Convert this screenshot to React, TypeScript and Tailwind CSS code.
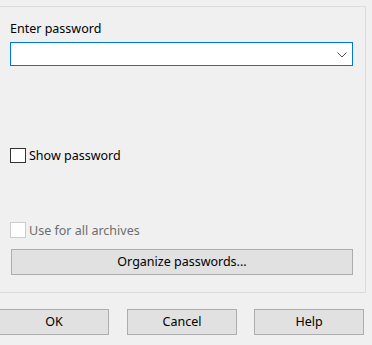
import React from "react";

const font = { fontFamily: '"Noto Sans", "Open Sans", sans-serif' };

export default function App() {
  return (
    <div className="w-[372px] h-[345px] bg-[#f0f0f0] overflow-hidden text-[12.5px] text-black" style={font}>
      <div className="flex flex-col">
        <div className="mt-[6px] ml-[-10px] w-[376px] h-[287px] border border-[#dcdcdc] pl-[19px] pr-[12px] flex flex-col">
          <div className="mt-[14px] h-[16px] leading-[16px]">Enter password</div>
          <div className="mt-[5px] h-[24px] border border-[#0078d7] bg-white flex items-center justify-end pr-[5px]">
            <svg width="10" height="6" viewBox="0 0 10 6" className="mt-[1px]">
              <path d="M0.5 0.5 L5 5 L9.5 0.5" fill="none" stroke="#555" strokeWidth="1" />
            </svg>
          </div>
          <div className="mt-[81px] flex items-center h-[16px]">
            <div className="w-[16px] h-[15px] shrink-0 border border-[#333] bg-white" />
            <span className="ml-[3px] leading-[16px] mt-[1px]">Show password</span>
          </div>
          <div className="mt-[59px] flex items-center h-[16px]">
            <div className="w-[16px] h-[16px] shrink-0 border border-[#cccccc] bg-white" />
            <span className="ml-[3px] leading-[16px] mt-[1px] text-[#6d6d6d]">Use for all archives</span>
          </div>
          <div className="mt-[11px] ml-[1px] h-[26px] border border-[#adadad] bg-[#e1e1e1] flex items-center justify-center">
            Organize passwords...
          </div>
        </div>
        <div className="mt-[16px] ml-[-1px] flex">
          <div className="w-[110px] h-[26px] border border-[#adadad] bg-[#e1e1e1] flex items-center justify-center">OK</div>
          <div className="ml-[18px] w-[110px] h-[26px] border border-[#adadad] bg-[#e1e1e1] flex items-center justify-center">Cancel</div>
          <div className="ml-[17px] w-[110px] h-[26px] border border-[#adadad] bg-[#e1e1e1] flex items-center justify-center">Help</div>
        </div>
      </div>
    </div>
  );
}
